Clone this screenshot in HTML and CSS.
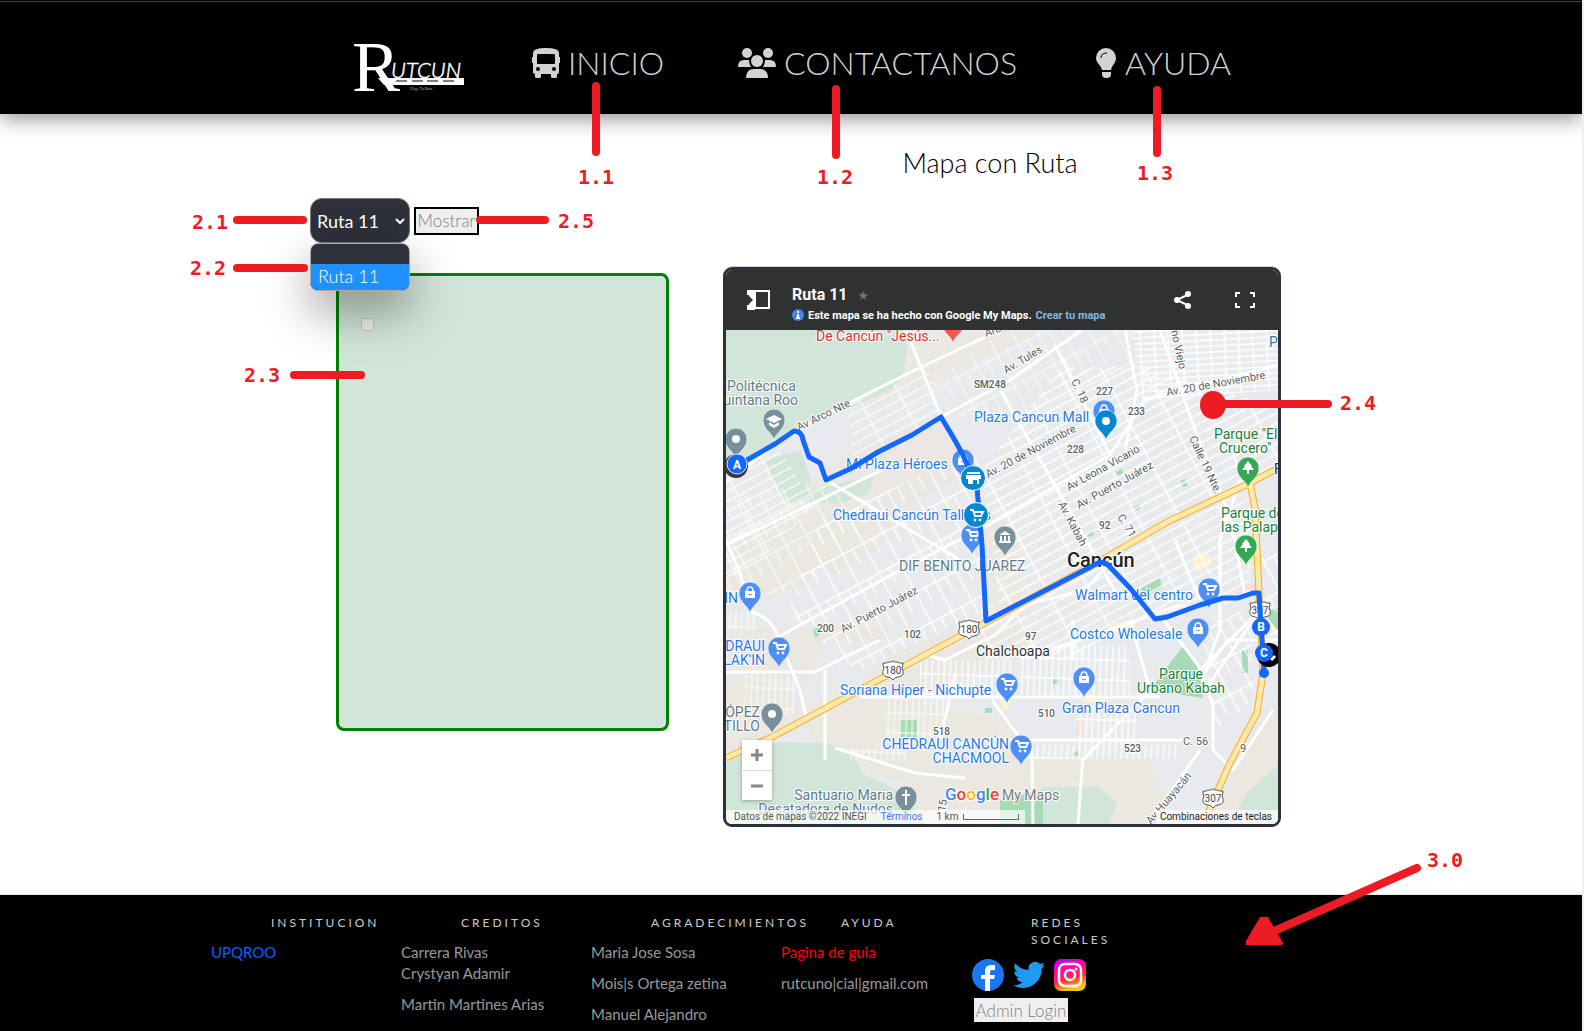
FILE: index.html
```html
<!DOCTYPE html>
<html lang="es">
<head>
<meta charset="utf-8">
<title>Rutcun - Mapa con Ruta</title>
<link rel="stylesheet" href="styles.css">
</head>
<body>
<header class="site-header">
  <nav class="nav">
    <a class="logo" href="#" aria-label="Rutcun">
      <svg width="114" height="58" viewBox="352 34 114 58">
        <text class="logo-r" x="352" y="91">R</text>
        <path d="M378 78H464V85H384z" fill="#fff"/>
        <path d="M396 81h11M412 81h11M427 81h11M443 81h11" stroke="#000" stroke-width="1"/>
        <text class="logo-name" x="391" y="78">UTCUN</text>
        <text class="logo-tag" x="410" y="90">Elige Tu Ruta</text>
      </svg>
    </a>
    <a class="nav-link" href="#">
      <svg width="28" height="32" viewBox="0 0 28 32"><path fill="currentColor" fill-rule="evenodd" d="M1 6Q1 1 14 1T27 6V10h1v6h-1v9q0 2-2 2v3q0 1-2 1h-2q-2 0-2-1v-3H9v3q0 1-2 1H5q-2 0-2-1v-3q-2 0-2-2v-9H0v-6h1zM5 8v8q0 1 1 1h16q1 0 1-1V8q0-1-1-1H6Q5 7 5 8zM6 20a2 2 0 1 0 0 4 2 2 0 0 0 0-4zm16 0a2 2 0 1 0 0 4 2 2 0 0 0 0-4z"/></svg>
      <span>INICIO</span>
    </a>
    <a class="nav-link" href="#">
      <svg width="38" height="32" viewBox="0 0 38 32"><g fill="currentColor"><circle cx="9" cy="6" r="5"/><circle cx="30" cy="6" r="5"/><circle cx="19" cy="14" r="6"/><path d="M0 20q0-7 6-7h5q0 4 2 7zM38 20q0-7-6-7h-5q0 4-2 7zM8 31q0-9 8-9h6q8 0 8 9z"/></g></svg>
      <span>CONTACTANOS</span>
    </a>
    <a class="nav-link" href="#">
      <svg width="21" height="32" viewBox="0 0 21 32"><path fill="currentColor" d="M10 1a10 10 0 0 1 10 10c0 5-4 7-5 12H6C5 18 0 16 0 11A10 10 0 0 1 10 1zM6 25h9v2q0 4-4 4h-1q-4 0-4-4z"/><path d="M5 11q0-5 6-5" fill="none" stroke="#000" stroke-width="1"/></svg>
      <span>AYUDA</span>
    </a>
  </nav>
</header>

<main class="main">
  <section class="side">
    <form class="controls">
      <div class="picker">
        <label class="hidden" for="ruta">Ruta</label>
        <select id="ruta"><option></option><option selected>Ruta 11</option></select>
        <svg class="chevron" width="10" height="8" viewBox="0 0 10 8"><path d="M1 2l4 4 4-4" fill="none" stroke="#fff" stroke-width="2"/></svg>
        <ul class="menu"><li></li><li class="active">Ruta 11</li></ul>
      </div>
      <button class="show" type="button">Mostrar</button>
    </form>
    <div class="panel"><input type="checkbox" disabled aria-label="Parada"></div>
  </section>

  <section class="route">
    <h1>Mapa con Ruta</h1>
    <div class="map">
      <div class="map-head">
        <svg class="toggle" width="24" height="20" viewBox="0 0 24 20"><path d="M0 0h8v20H0v-5h2v-1l4-4-4-4v-1H0z" fill="#fff"/><path d="M0 9h4" stroke="#303131" stroke-width="2"/><path d="M8 1h14v17H8z" fill="none" stroke="#fff" stroke-width="2"/></svg>
        <div class="map-title">
          <h2>Ruta 11 <span class="star">★</span></h2>
          <p><svg width="12" height="12" viewBox="0 0 12 12"><circle cx="6" cy="6" r="6" fill="#4285f4"/><path d="M6 2v2M6 5v5M4 9h4" stroke="#fff" stroke-width="2"/></svg><span>Este mapa se ha hecho con Google My Maps.</span><a href="#">Crear tu mapa</a></p>
        </div>
        <svg width="18" height="18" viewBox="0 0 18 18"><path d="M15 3L3 9l12 6" fill="none" stroke="#fff" stroke-width="2"/><g fill="#fff"><circle cx="14" cy="3" r="3"/><circle cx="3" cy="9" r="3"/><circle cx="14" cy="15" r="3"/></g></svg>
        <svg class="full" width="20" height="16" viewBox="0 0 20 16"><path d="M1 5V1h4M15 1h4v4M19 11v4h-4M5 15H1v-4" fill="none" stroke="#fff" stroke-width="2"/></svg>
      </div>
      <div class="map-body">
        <svg class="map-art" viewBox="726 330 552 494" preserveAspectRatio="xMidYMid slice">
          <defs>
            <pattern id="diag" width="38" height="9" patternUnits="userSpaceOnUse" patternTransform="rotate(-28)"><path d="M0 1h38M1 0v9" stroke="#fff" stroke-width="1.4"/></pattern>
            <pattern id="wide" width="23" height="34" patternUnits="userSpaceOnUse" patternTransform="rotate(-28)"><path d="M0 1h23M1 0v34M12 0v17" stroke="#fff" stroke-width="1.3"/></pattern>
            <pattern id="fine" width="14" height="6" patternUnits="userSpaceOnUse" patternTransform="rotate(-3)"><path d="M0 1h14M1 0v6" stroke="#fff" stroke-width="1.4"/></pattern>
            <pattern id="tall" width="6" height="20" patternUnits="userSpaceOnUse" patternTransform="rotate(2)"><path d="M1 0v20M0 1h6" stroke="#fff" stroke-width="1.3"/></pattern>
            <g id="pin"><path d="M0 20C-2 12-11 10-11 0A11 11 0 0 1 11 0C11 10 2 12 0 20z" stroke="#fff" stroke-opacity=".6"/></g>
            <g id="cart"><path d="M-6-5h3l2 6h6l2-4h-9" fill="none" stroke="#fff" stroke-width="2"/><circle cx="-1" cy="5" r="1.4" fill="#fff"/><circle cx="4" cy="5" r="1.4" fill="#fff"/></g>
            <g id="bag"><path d="M-5-2H5V5H-5z" fill="#fff"/><path d="M-3-2q0-4 3-4t3 4" fill="none" stroke="#fff" stroke-width="1.5"/><path d="M-2 1q2 2 4 0" fill="none" stroke="#4f8ff5"/></g>
            <g id="tree"><path d="M0-7l4 5H3l3 4H1v4h-2V2h-5l3-4h-1z" fill="#fff"/></g>
            <g id="shield"><path d="M-10-7q3 1 5-1 2 1 5-1 3 2 5 1 2 2 5 1 0 3-1 5 4 8-4 9-3 0-5 3-2-3-5-3-8-1-4-9-1-2-1-5z" fill="#fff" stroke="#555"/></g>
          </defs>
          <rect x="726" y="330" width="552" height="494" fill="#e8eaed"/>
          <g fill="#ebe8e1">
            <path d="M903 330H1045L920 388 860 412 858 395zM845 455L940 415 960 450 972 500 880 540 726 610V540zM726 672l70 10 40 60 190-90-10-130-80-20 70 125H726z" opacity=".9"/>
            <path d="M726 675l60 10 20 35-80 38z"/><path d="M900 700l110 20 10 55-125 5-80-20-10-60zM1000 758h205l-50 66H900v-40zM1278 700l-35 50-40 74h75z"/>
            <path d="M800 550l60-30 25 25-50 30zM745 575l50-25 15 30-40 20z"/>
          </g>
          <g fill="#e8eaed"><path d="M920 500l58-30 12 140-90 40-40-80zM830 640h80l-60 50-60 20zM1150 760h60l-20 40-30-10z"/></g>
          <g fill="#d1e6d9">
            <path d="M726 330H903l4 20-4 25-13 15-100 44-26 18-38 15z"/><path d="M765 460l36-10 10 30-14 25-14-5zM794 495l60-15 20-5-5 18-30 11-42-4z"/>
            <path d="M726 762l49-20 50 1 27 10 10 20 30 14 23 20v17H726zM1043 787h54l20 15-8 22h-66zM1278 765l-32 28-16 31h48z"/>
          </g>
          <g fill="#a8dab5"><path d="M1183 646l16 24 4 28-53-8zM900 720h17v17h-17zM1000 800l43-10v34h-43zM1140 588l20-10 2 10-16 8zM1242 650h6v23h-6zM1116 472l6-3 2 5-6 3zM1180 481l5-2 3 7-5 1zM1133 507l7-3v5l-6 2zM1087 533l7-3v5l-6 2zM813 630l5-3 1 8-4 3zM1053 679h6v5h-6zM985 708h7v5h-7zM1072 755l6-5v6zM1262 612l16-4v22z"/></g>
          <path d="M1110 624l25-4v7l-24 4zM1083 696h22v6h-22zM1195 555l12-3 5 12-12 8-8-6zM1000 700l12 2-8 10z" fill="#fdf1cf"/>
          <path d="M1077 718h6v17h-6zM1238 587l16-4 8 8-22 5z" fill="#fbdcd7"/>
          <path d="M1060 368L1140 365 1278 408V468L1126 545 1000 607 982 470z" fill="url(#diag)"/>
          <path d="M1132 330H1278V390L1142 400z" fill="url(#fine)"/>
          <path d="M980 610L1120 550 1250 490V600L1150 615 1080 660H980z" fill="url(#diag)" opacity=".9"/>
          <path d="M820 520l160-70 8 160-130 62-70-60z" fill="url(#wide)"/>
          <path d="M726 500l90-20 60 40-80 70-70 10z" fill="url(#wide)" opacity=".7"/>
          <path d="M848 405l80-35 15 45-90 50z" fill="url(#diag)" opacity=".8"/>
          <path d="M726 465l50-20 40 60-60 60-30 10z" fill="url(#diag)" opacity=".8"/>
          <path d="M1004 330h128v40l-60 25-80 30-40-10-20-35z" fill="url(#wide)" opacity=".6"/>
          <path d="M1020 645h110v50h-110zM920 660h95v35h-95zM1076 705h60v40h-60zM1020 745h160v14h-160z" fill="url(#tall)"/>
          <path d="M745 675h50v40h-50zM847 748h60v12h-60zM885 697h60v40h-60zM726 612h32v18h-32z" fill="url(#tall)" opacity=".7"/>
          <path d="M1200 620l50-10 5 90-40 30zM1262 545h16v90h-16z" fill="url(#wide)"/>
          <g fill="none" stroke="#fff" stroke-width="3" stroke-linejoin="round">
            <path d="M726 482L790 434 855 400 915 370 1000 330"/><path d="M726 545L882 470M826 480L960 560M941 417L1010 380 1082 330M941 417l-20-50-15-37"/>
            <path d="M726 540Q748 590 752 612 772 618 778 637L800 690 806 716M778 637L882 580 982 528 1110 455 1145 400 1278 365"/>
            <path d="M726 672H815L880 640M925 655l20 5 50-25 30-30 60-15 45-50M1055 345l55 110M1125 330l12 60-12 60M1000 390L1075 520 1120 600"/>
            <path d="M1000 650h50l60-20 70-25M860 697H1160M1160 615l38 50 15 40v45l20 20 40-60M1160 330l35 100 35 85 15 80"/>
            <path d="M1200 750L1148 824M1083 757L1078 824M825 670v90M940 740l15-65M992 700l40 55 1 69M1000 740h190M1175 540l25 60M1130 620l20 70-67 70M835 748l80 25 50 5"/>
            <path d="M1073 660V620M1240 480l-20 60v90l-15 40M1200 670l60-60M1205 690l55-80M1278 640h-50l-25 35"/>
          </g>
          <g fill="none"><path d="M726 758L772 737 992 619 1100 561 1167 522 1250 483 1278 468M1250 483l5 25 4 85 4 80-6 40-27 50-27 61" stroke="#f7ad25" stroke-width="7"/><path d="M726 758L772 737 992 619 1100 561 1167 522 1250 483 1278 468M1250 483l5 25 4 85 4 80-6 40-27 50-27 61" stroke="#fee9ad" stroke-width="5"/></g>
          <g class="road">
            <text transform="translate(986 337) rotate(-20)">Arc</text>
            <text transform="translate(799 431) rotate(-26)">Av Arco Nte</text>
            <text transform="translate(1006 374) rotate(-31)">Av. Tules</text>
            <text transform="translate(1071 381) rotate(65)">C. 18</text>
            <text transform="translate(1171 331) rotate(78)">no Viejo</text>
            <text transform="translate(1167 396) rotate(-10)">Av. 20 de Noviembre</text>
            <text transform="translate(988 478) rotate(-28)">Av. 20 de Noviembre</text>
            <text transform="translate(1069 491) rotate(-29)">Av Leona Vicario</text>
            <text transform="translate(1079 509) rotate(-29)">Av. Puerto Juárez</text>
            <text transform="translate(1189 438) rotate(65)">Calle 19 Nte.</text>
            <text transform="translate(1058 504) rotate(62)">Av. Kabah</text>
            <text transform="translate(1117 517) rotate(58)">C. 71</text>
            <text transform="translate(843 633) rotate(-28)">Av. Puerto Juárez</text>
            <text transform="translate(1151 825) rotate(-50)">Av Huayacán</text>
            <text transform="translate(945 812) rotate(-80)">15</text>
            <text x="1183" y="745">C. 56</text><text x="1240" y="752">9</text>
          </g>
          <g class="zone">
            <text x="974" y="388">SM248</text><text x="1096" y="395">227</text><text x="1128" y="415">233</text><text x="1067" y="453">228</text><text x="1099" y="529">92</text>
            <text x="1025" y="640">97</text><text x="904" y="638">102</text><text x="817" y="632">200</text><text x="933" y="735">518</text><text x="1038" y="717">510</text><text x="1124" y="752">523</text>
          </g>
          <g fill="#4f8ff5">
            <use href="#pin" x="1104" y="411"/><use href="#pin" x="963" y="460"/><use href="#pin" x="972" y="535"/><use href="#pin" x="1209" y="589"/><use href="#pin" x="1198" y="629"/><use href="#pin" x="1084" y="678"/><use href="#pin" x="1007" y="684"/><use href="#pin" x="1021" y="746"/><use href="#pin" x="750" y="593"/><use href="#pin" x="779" y="648"/>
          </g>
          <g fill="#78909c"><use href="#pin" x="736" y="439"/><use href="#pin" x="774" y="420"/><use href="#pin" x="1005" y="537"/><use href="#pin" x="772" y="714"/><use href="#pin" x="906" y="797"/></g>
          <g fill="#34a853"><use href="#pin" x="1248" y="468"/><use href="#pin" x="1246" y="546"/></g>
          <use href="#pin" x="953" y="323" fill="#ee5a52"/>
          <use href="#bag" x="1104" y="411"/><use href="#bag" x="963" y="460"/><use href="#bag" x="1198" y="629"/><use href="#bag" x="1084" y="678"/><use href="#bag" x="750" y="593"/>
          <use href="#cart" x="972" y="535"/><use href="#cart" x="1209" y="589"/><use href="#cart" x="1007" y="684"/><use href="#cart" x="1021" y="746"/><use href="#cart" x="779" y="648"/>
          <use href="#tree" x="1248" y="468"/><use href="#tree" x="1246" y="546"/>
          <g fill="#fff"><circle cx="736" cy="439" r="4"/><circle cx="772" cy="714" r="4"/><path d="M766 419l8-4 8 4-8 4zM769 422l5 3 5-3v3l-5 3-5-3zM999 535l6-4 6 4zM1000 536h2v5h-2zM1004 536h2v5h-2zM1008 536h2v5h-2zM999 541h12v2h-12zM905 790h2v4h3v2h-3v9h-2v-9h-3v-2h3z"/></g>
          <use href="#shield" x="969" y="629"/><use href="#shield" x="893" y="670"/><use href="#shield" x="1260" y="610"/><use href="#shield" x="1213" y="798"/>
          <g class="shield-no"><text x="969" y="633">180</text><text x="893" y="674">180</text><text x="1260" y="614">307</text><text x="1213" y="802">307</text></g>
          <g class="poi blue">
            <text x="974" y="422">Plaza Cancun Mall</text><text x="846" y="469">Mi Plaza Héroes</text><text x="833" y="520">Chedraui Cancún Talleres</text>
            <text x="1075" y="600">Walmart del centro</text><text x="1070" y="639">Costco Wholesale</text><text x="1062" y="713">Gran Plaza Cancun</text><text x="840" y="695">Soriana Híper - Nichupte</text>
            <g text-anchor="end"><text x="1009" y="749">CHEDRAUI CANCÚN</text><text x="1009" y="763">CHACMOOL</text><text x="738" y="603">IN</text><text x="765" y="651">DRAUI</text><text x="765" y="665">LAK'IN</text></g>
          </g>
          <g class="poi slate">
            <text x="727" y="391">Politécnica</text><text x="899" y="571">DIF BENITO JUAREZ</text>
            <g text-anchor="end"><text x="798" y="405">uintana Roo</text><text x="760" y="717">ÓPEZ</text><text x="760" y="731">TILLO</text><text x="893" y="800">Santuario Maria</text><text x="893" y="814">Desatadora de Nudos</text></g>
          </g>
          <g class="poi green"><text x="1214" y="439">Parque "El</text><text x="1219" y="453">Crucero"</text><text x="1221" y="518">Parque de</text><text x="1221" y="532">las Palapas</text><g text-anchor="middle"><text x="1181" y="679">Parque</text><text x="1181" y="693">Urbano Kabah</text></g></g>
          <text class="poi red" x="816" y="341">De Cancún "Jesús...</text>
          <text class="poi teal" x="1269" y="347">P</text>
          <text class="poi dark" x="976" y="656">Chalchoapa</text><text class="poi dark" x="1274" y="474">F</text>
          <text class="city" x="1067" y="567">Cancún</text>
          <path d="M736 465L747 460 775 444 794 431 Q802 431 803 440L809 457 820 463 826 480 852 468 878 452 912 435 941 417 953 437 963 455 977 488 982 545 986 621 1100 562 1107 564 1130 588 1155 619 1167 617 1200 605 1223 598 1238 598 1253 593 1259 593 1261 627 1263 653 1264 673" fill="none" stroke="#1267ff" stroke-width="5" stroke-linejoin="round" stroke-linecap="round"/>
          <path d="M1106 439C1102 431 1095 428 1095 421a11 11 0 0 1 22 0c0 7-7 10-11 18z" fill="#0288d1" stroke="#fff" stroke-width=".5"/><circle cx="1106" cy="421" r="4" fill="#fff"/>
          <g stroke="#fff"><circle cx="973" cy="478" r="12.500" fill="#0288d1"/><circle cx="976" cy="515" r="12.500" fill="#0288d1"/></g>
          <path d="M967 472h13v2h-13zM966 475h15v4h-15zM968 479h11v5h-2v-4h-4v4h-5z" fill="#fff"/><use href="#cart" x="976" y="515"/>
          <circle cx="736" cy="466" r="12" fill="#3a3a3a"/><circle cx="737" cy="464" r="10" fill="#1267ff" stroke="#dbe7ff"/>
          <circle cx="1269" cy="655" r="12" fill="#000"/><path d="M1271 660l4-4" stroke="#fff" stroke-width="3"/>
          <g fill="#1267ff"><circle cx="1261" cy="627" r="9"/><circle cx="1264" cy="653" r="9"/><circle cx="1264" cy="673" r="5"/></g>
          <g class="stop"><text x="737" y="469">A</text><text x="1261" y="631">B</text><text x="1264" y="657">C</text></g>
          <text class="google" x="945" y="800"><tspan fill="#4285f4">G</tspan><tspan fill="#ea4335">o</tspan><tspan fill="#fbbc04">o</tspan><tspan fill="#4285f4">g</tspan><tspan fill="#34a853">l</tspan><tspan fill="#ea4335">e</tspan></text><text class="mymaps" x="1002" y="800">My Maps</text>
        </svg>
        <div class="zoom"><button type="button" aria-label="Acercar"><svg width="12" height="12" viewBox="0 0 12 12"><path d="M6 0v12M0 6h12" stroke="#888" stroke-width="3"/></svg></button><button type="button" aria-label="Alejar"><svg width="12" height="12" viewBox="0 0 12 12"><path d="M0 6h12" stroke="#888" stroke-width="3"/></svg></button></div>
        <div class="credits"><span>Datos de mapas ©2022 INEGI</span><a href="#">Términos</a><span class="scale">1 km <i></i></span></div>
        <div class="keys">Combinaciones de teclas</div>
      </div>
    </div>
  </section>
</main>

<footer class="footer">
  <div class="cols">
    <section><h3>INSTITUCION</h3><ul><li><a class="inst" href="#">UPQROO</a></li></ul></section>
    <section><h3>CREDITOS</h3><ul><li>Carrera Rivas<br>Crystyan Adamir</li><li>Martin Martines Arias</li></ul></section>
    <section><h3>AGRADECIMIENTOS</h3><ul><li>Maria Jose Sosa</li><li>Mois|s Ortega zetina</li><li>Manuel Alejandro</li></ul></section>
    <section><h3>AYUDA</h3><ul><li><a class="guide" href="#">Pagina de guia</a></li><li>rutcuno|cial|gmail.com</li></ul></section>
    <section><h3>REDES SOCIALES</h3>
      <div class="social">
        <a href="#" aria-label="Facebook"><svg width="32" height="32" viewBox="0 0 32 32"><circle cx="16" cy="16" r="16" fill="#1877f2"/><path d="M13 32V20H9v-4h4v-4q0-6 6-6h4v5h-3q-2 0-2 2v3h5l-1 4h-4v12z" fill="#fff"/></svg></a>
        <a href="#" aria-label="Twitter"><svg width="32" height="32" viewBox="0 0 24 24"><path fill="#1d9bf0" d="M23.950 4.570a10 10 0 0 1-2.820.770 4.960 4.960 0 0 0 2.160-2.720 9.990 9.990 0 0 1-3.120 1.190 4.920 4.920 0 0 0-8.380 4.480C7.690 8.090 4.070 6.130 1.640 3.160a4.920 4.920 0 0 0 1.520 6.570 4.900 4.900 0 0 1-2.230-.610v.060a4.920 4.920 0 0 0 3.950 4.830 5 5 0 0 1-2.210.080 4.940 4.940 0 0 0 4.600 3.420A9.870 9.870 0 0 1 0 19.540a13.940 13.940 0 0 0 7.550 2.210c9.050 0 14-7.500 14-13.980 0-.210 0-.420-.020-.630a9.940 9.940 0 0 0 2.420-2.570z"/></svg></a>
        <a href="#" aria-label="Instagram"><svg width="32" height="32" viewBox="0 0 32 32"><defs><linearGradient id="ig" x1="0" y1="0" x2="0.300" y2="1"><stop offset="0" stop-color="#a000ff"/><stop offset=".35" stop-color="#ff00b8"/><stop offset=".7" stop-color="#ff2b3d"/><stop offset="1" stop-color="#ffc400"/></linearGradient></defs><rect width="32" height="32" rx="7" fill="url(#ig)"/><g fill="none" stroke="#fff" stroke-width="2.500"><rect x="5" y="5" width="22" height="22" rx="6"/><circle cx="16" cy="16" r="5"/></g><circle cx="22" cy="10" r="1.500" fill="#fff"/></svg></a>
      </div>
      <button class="admin" type="button">Admin Login</button>
    </section>
  </div>
</footer>

<svg class="notes" width="1584" height="1031" viewBox="0 0 1584 1031">
  <path d="M596 86V152M836 89V155M1157 90V153M237 220H303M237 268H304M480 220H545M294 375H361M1213 404H1328M1417 868L1272 932"/>
  <ellipse cx="1213" cy="405" rx="13" ry="14"/>
  <path class="head" d="M1260 917h8l15 26-1 2h-36v-4z"/>
  <text x="596" y="184">1.1</text><text x="835" y="184">1.2</text><text x="1155" y="180">1.3</text>
  <text x="210" y="229">2.1</text><text x="208" y="275">2.2</text><text x="576" y="228">2.5</text>
  <text x="262" y="382">2.3</text><text x="1358" y="410">2.4</text><text x="1445" y="867">3.0</text>
</svg>
</body>
</html>
```
FILE: styles.css
```css
* { box-sizing: border-box; }
body {
  margin: 0;
  min-height: 100vh;
  display: flex;
  flex-direction: column;
  position: relative;
  background: #fff;
  border-right: 2px solid #f0f0f0;
  font-family: Lato, sans-serif;
}
h1, h2, h3, p, ul { margin: 0; padding: 0; font-weight: 400; }
ul { list-style: none; }
a { color: inherit; text-decoration: none; }
svg { display: block; flex: none; }
button { font-family: inherit; padding: 0; }
.hidden { position: absolute; clip-path: inset(50%); width: 1px; height: 1px; overflow: hidden; }

.site-header {
  height: 114px;
  padding-top: 1px;
  background: linear-gradient(#444, #444) 0 1px / 100% 1px no-repeat #000;
  box-shadow: 0 4px 20px rgba(0, 0, 0, .45);
}
.nav {
  display: grid;
  grid-template-columns: 180px 206px 358px 134px;
  justify-content: center;
  align-items: center;
  height: 124px;
}
.logo svg { overflow: visible; }
.logo-r { font: 72px "Liberation Serif", serif; fill: #fff; }
.logo-name { font: italic 300 22px Lato, sans-serif; fill: #fff; stroke: #fff; stroke-width: .5px; }
.logo-tag { font: 4px "Liberation Serif", serif; fill: #bbb; }
.nav-link { display: flex; align-items: center; gap: 8px; color: #d3d3d3; font-size: 32px; font-weight: 300; line-height: 40px; white-space: nowrap; }

.main {
  display: flex;
  justify-content: space-between;
  width: 100%;
  max-width: 982px;
  margin: 0 auto;
  padding: 0 1px 67px 10px;
}
.side { padding-top: 84px; }
.controls { display: flex; align-items: center; gap: 4px; margin-bottom: 30px; }
.picker { position: relative; }
.picker select {
  display: block;
  appearance: none;
  width: 100px;
  height: 45px;
  padding: 0 6px;
  border: 1px solid #777;
  border-radius: 12px;
  background: #2e303a;
  color: #fff;
  font: 18px Lato, sans-serif;
}
.chevron { position: absolute; right: 5px; top: 19px; pointer-events: none; }
.menu {
  position: absolute;
  top: 45px;
  left: 0;
  width: 100px;
  z-index: 2;
  overflow: hidden;
  border: 1px solid #aaa;
  border-radius: 8px;
  background: #2e303a;
  color: #fff;
  font-size: 18px;
  font-weight: 300;
  box-shadow: 0 20px 48px rgba(0, 0, 0, .4);
}
.menu li { height: 20px; }
.menu .active { height: 26px; padding-left: 7px; line-height: 24px; background: #1e90ff; }
.show { width: 65px; height: 28px; border: 2px solid #000; background: #efefef; color: #808080; font-size: 17px; font-weight: 300; white-space: nowrap; }
.panel { width: 333px; height: 458px; margin-left: 26px; padding: 42px 22px; border: 3px solid green; border-radius: 8px; background: #d1e5d9; }
.panel input { display: block; margin: 0; width: 13px; height: 13px; }

.route { width: 558px; }
h1 { padding: 33px 24px 0 0; height: 152px; text-align: center; font-size: 27px; line-height: 32px; font-weight: 300; color: #000; }
.map { margin-top: 1px; border: 3px solid #2e303b; border-radius: 9px; overflow: hidden; box-shadow: 0 -1px #e8cdd3; font-family: Roboto, sans-serif; }
.map-head { display: flex; align-items: center; height: 60px; padding: 0 23px 0 21px; background: #303131; color: #fff; }
.map-title { flex: 1; margin-left: 21px; padding-top: 8px; }
.map-title h2 { font-size: 16px; font-weight: 700; line-height: 22px; }
.star { margin-left: 6px; color: #707070; font: 13px "DejaVu Sans", sans-serif; }
.map-title p { display: flex; align-items: center; gap: 4px; font-size: 11px; font-weight: 700; line-height: 19px; white-space: nowrap; }
.map-title p a { color: #85b7e6; }
.full { margin-left: 43px; }
.map-body { position: relative; }
.map-art { width: 100%; height: 494px; }
.road text, .zone text { fill: #5a5d60; paint-order: stroke; stroke: #fff; stroke-width: 2px; }
.road text { font-size: 11px; }
.zone text { font-size: 10px; font-weight: 500; }
.poi, .poi text { font-size: 14px; paint-order: stroke; stroke: #fff; stroke-width: 2px; }
.blue { fill: #2878e6; }
.slate { fill: #5c7a89; }
.green { fill: #188038; }
.red { fill: #d93030; }
.teal { fill: #12888e; }
.dark { fill: #303134; }
.city { font-size: 20px; font-weight: 500; fill: #202124; paint-order: stroke; stroke: #fff; stroke-width: 2px; }
.shield-no text { font-size: 10px; text-anchor: middle; fill: #444; }
.stop text { font-size: 12px; font-weight: 700; text-anchor: middle; fill: #fff; }
.google { font-size: 17px; font-weight: 500; paint-order: stroke; stroke: #fff; stroke-width: 2px; }
.mymaps { font-size: 14px; fill: #777; paint-order: stroke; stroke: #fff; stroke-width: 2px; }
.zoom { position: absolute; left: 16px; bottom: 24px; width: 30px; background: #fff; box-shadow: 0 1px 4px rgba(0, 0, 0, .3); }
.zoom button { display: flex; align-items: center; justify-content: center; width: 30px; height: 30px; border: 0; background: none; }
.zoom button + button { border-top: 1px solid #ddd; }
.credits, .keys { position: absolute; bottom: 0; height: 14px; background: rgba(255, 255, 255, .7); font-size: 10px; line-height: 14px; color: #555; white-space: nowrap; }
.credits { left: 0; display: flex; gap: 14px; padding: 0 6px 0 8px; }
.credits a { color: #3b78e7; }
.scale { display: flex; gap: 5px; }
.scale i { width: 56px; height: 6px; margin-top: 4px; border: 1px solid #666; border-top: 0; }
.keys { right: 0; padding: 0 6px 0 4px; color: #222; }

.footer { flex: 1; padding-top: 19px; border-top: 1px solid #dce8e2; background: #000; color: #999; }
.cols { display: grid; grid-template-columns: repeat(5, 190px); width: 100%; max-width: 1160px; margin: 0 auto; }
.cols h3 { padding: 0 40px 0 60px; margin-bottom: 11px; font-size: 12px; line-height: 17px; letter-spacing: 3px; color: #ccc; }
.cols li { margin-bottom: 10px; font-size: 15px; line-height: 21px; white-space: nowrap; }
.inst { color: #0d5fff; }
.guide { color: #f00; }
.social { display: flex; gap: 9px; margin-left: 1px; }
.admin { display: block; width: 94px; height: 24px; margin: 7px 0 8px 3px; border: 0; background: #efefef; color: #808080; font-size: 17px; font-weight: 300; white-space: nowrap; }

.notes { position: absolute; left: 0; top: 0; z-index: 5; pointer-events: none; }
.notes path { fill: none; stroke: #ed1c24; stroke-width: 8px; stroke-linecap: round; }
.notes .head, .notes ellipse { fill: #ed1c24; stroke: none; }
.notes text { font: 700 20px "DejaVu Sans Mono", monospace; fill: #ed1c24; text-anchor: middle; }
```
